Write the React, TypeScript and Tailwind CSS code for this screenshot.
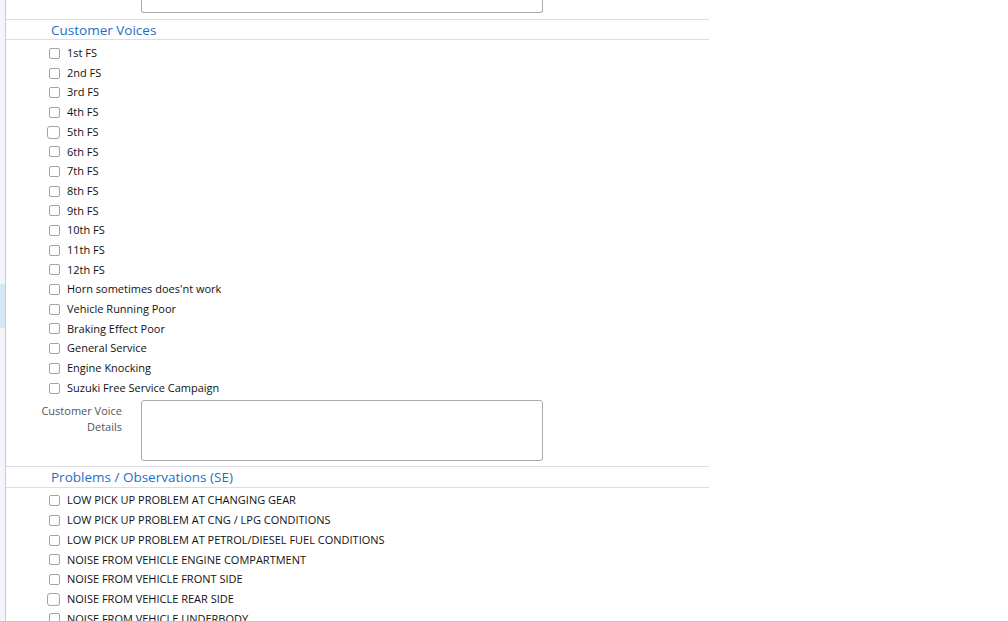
import React from "react";

const voices = [
  "1st FS",
  "2nd FS",
  "3rd FS",
  "4th FS",
  "5th FS",
  "6th FS",
  "7th FS",
  "8th FS",
  "9th FS",
  "10th FS",
  "11th FS",
  "12th FS",
  "Horn sometimes does'nt work",
  "Vehicle Running Poor",
  "Braking Effect Poor",
  "General Service",
  "Engine Knocking",
  "Suzuki Free Service Campaign",
];

const problems = [
  "LOW PICK UP PROBLEM AT CHANGING GEAR",
  "LOW PICK UP PROBLEM AT CNG / LPG CONDITIONS",
  "LOW PICK UP PROBLEM AT PETROL/DIESEL FUEL CONDITIONS",
  "NOISE FROM VEHICLE ENGINE COMPARTMENT",
  "NOISE FROM VEHICLE FRONT SIDE",
  "NOISE FROM VEHICLE REAR SIDE",
  "NOISE FROM VEHICLE UNDERBODY",
];

// a couple of boxes render a little larger in the original (native focus sizing)
const bigBoxes = new Set(["5th FS", "NOISE FROM VEHICLE REAR SIDE"]);

function CheckRow({ label }: { label: string }) {
  const big = bigBoxes.has(label);
  return (
    <label className="flex items-center h-[19.7px] shrink-0">
      <span className="w-[54px] shrink-0 flex justify-end">
        {big ? (
          <span className="w-[13px] h-[13px] border border-[#a3a3a3] rounded-[3px] bg-white" />
        ) : (
          <span className="w-[11px] h-[11px] border border-[#a3a3a3] rounded-[2px] bg-white" />
        )}
      </span>
      <span className="ml-[7px] text-[11px] text-[#111] whitespace-nowrap">{label}</span>
    </label>
  );
}

function SectionHeader({ title, h, pt }: { title: string; h: string; pt: string }) {
  return (
    <div className={`${h} ${pt} shrink-0 border-y border-[#dddce6] flex items-center pl-[45px]`}>
      <span className="text-[13.5px] text-[#1c6fc6] leading-none">{title}</span>
    </div>
  );
}

export default function App() {
  return (
    <div
      className="w-[1008px] h-[622px] flex overflow-hidden bg-white border-b border-[#c6c6c6]"
      style={{ fontFamily: '"Open Sans", "DejaVu Sans", sans-serif' }}
    >
      <div className="w-[5px] shrink-0 bg-[#f2f6fa] flex flex-col">
        <div className="h-[284px]" />
        <div className="h-[44px] bg-[#d4e7f6]" />
      </div>
      <div className="w-px shrink-0 bg-[#cccccc]" />

      <div className="w-[703px] shrink-0 flex flex-col overflow-hidden">
        <div className="ml-[135px] w-[402px] h-[13px] shrink-0 border border-t-0 border-[#a9a9a9] rounded-b-[3px]" />

        <div className="mt-[6px]">
          <SectionHeader title="Customer Voices" h="h-[21px]" pt="pt-[2px]" />
        </div>
        <div className="pt-[3.5px] flex flex-col">
          {voices.map((v) => (
            <CheckRow key={v} label={v} />
          ))}
        </div>

        <div className="mt-[2.5px] flex shrink-0">
          <div className="w-[116px] pt-[3px] text-right text-[11px] leading-[16px] text-[#555]">
            Customer Voice
            <br />
            Details
          </div>
          <div className="ml-[19px] w-[402px] h-[61px] border border-[#a9a9a9] rounded-[3px]" />
        </div>

        <div className="mt-[5px]">
          <SectionHeader title="Problems / Observations (SE)" h="h-[22px]" pt="pt-0" />
        </div>
        <div className="pt-[2.5px] flex flex-col">
          {problems.map((p) => (
            <CheckRow key={p} label={p} />
          ))}
        </div>
      </div>
    </div>
  );
}
